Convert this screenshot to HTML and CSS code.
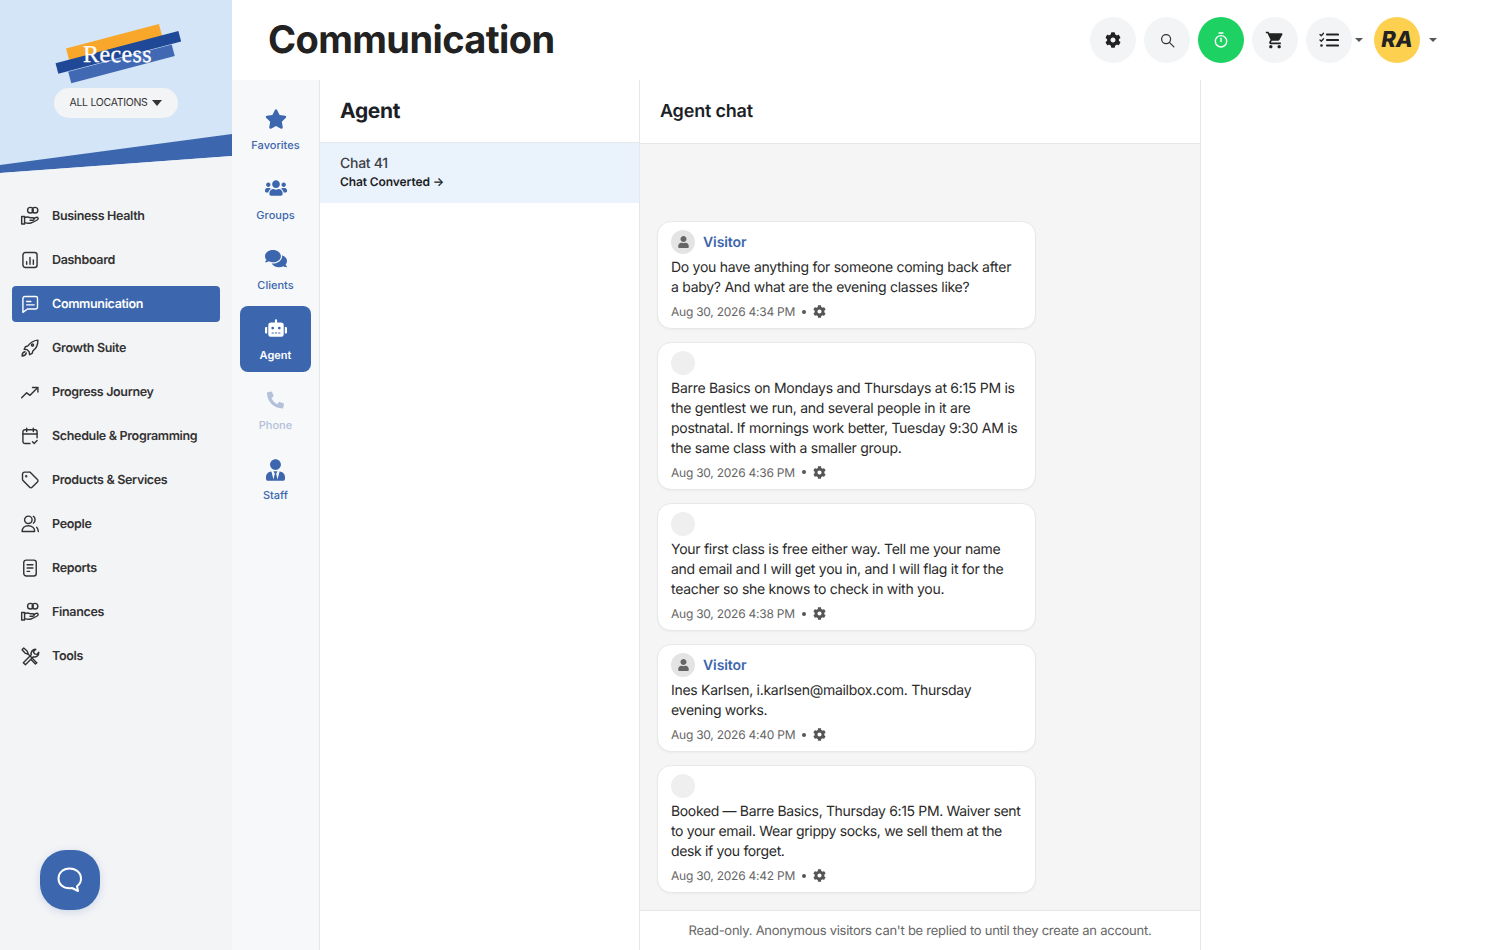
FILE: index.html
```html
<!DOCTYPE html>
<html lang="en">
  <head>
    <meta charset="UTF-8" />
    <meta name="viewport" content="width=device-width, initial-scale=1.0" />
    <title>Communication</title>
    <link rel="stylesheet" href="styles.css">
  </head>
  <body>
    <svg class="icon-defs" width="0" height="0">
      <symbol id="i-cog" viewBox="0 0 512 512"><path d="M487.4 315.7l-42.6-24.6c4.3-23.2 4.3-47 0-70.2l42.6-24.6c4.9-2.8 7.1-8.6 5.5-14-11.1-35.6-30-67.8-54.7-94.6-3.8-4.1-10-5.1-14.8-2.3L380.8 110c-17.9-15.4-38.5-27.3-60.8-35.1V25.8c0-5.6-3.9-10.5-9.4-11.7-36.7-8.2-74.3-7.8-109.2 0-5.5 1.2-9.4 6.1-9.4 11.7V75c-22.2 7.9-42.8 19.8-60.8 35.1L88.7 85.5c-4.9-2.8-11-1.9-14.8 2.3-24.7 26.7-43.6 58.9-54.7 94.6-1.7 5.4.6 11.2 5.5 14L67.3 221c-4.3 23.2-4.3 47 0 70.2l-42.6 24.6c-4.9 2.8-7.1 8.6-5.5 14 11.1 35.6 30 67.8 54.7 94.6 3.8 4.1 10 5.1 14.8 2.3l42.6-24.6c17.9 15.4 38.5 27.3 60.8 35.1v49.2c0 5.6 3.9 10.5 9.4 11.7 36.7 8.2 74.3 7.8 109.2 0 5.5-1.2 9.4-6.1 9.4-11.7v-49.2c22.2-7.9 42.8-19.8 60.8-35.1l42.6 24.6c4.9 2.8 11 1.9 14.8-2.3 24.7-26.7 43.6-58.9 54.7-94.6 1.5-5.5-.7-11.3-5.6-14.1zM256 336c-44.1 0-80-35.9-80-80s35.9-80 80-80 80 35.9 80 80-35.9 80-80 80z"/></symbol>
      <symbol id="i-hand" viewBox="0 0 24 24"><g fill="none" stroke="currentColor" stroke-width="1.7" stroke-linecap="round" stroke-linejoin="round"><circle cx="12.5" cy="5" r="3.4"/><circle cx="18" cy="5" r="3.4"/><path d="M2 12.5h3.5V21.5H2z"/><path d="M5.5 14c3-1.5 4.5-1 6.5 0h3.5c1.8 0 1.8 3 0 3H12"/><path d="M5.5 20c6 1.8 9 .5 15.5-3.5 1.8-1.5.3-3.5-1.5-2.8l-3 1.3"/></g></symbol>
      <symbol id="i-user" viewBox="0 0 448 512"><path d="M224 256c70.7 0 128-57.3 128-128S294.7 0 224 0 96 57.3 96 128s57.3 128 128 128zm89.6 32h-16.7c-22.2 10.2-46.9 16-72.9 16s-50.6-5.8-72.9-16h-16.7C60.2 288 0 348.2 0 422.4V464c0 26.5 21.5 48 48 48h352c26.5 0 48-21.5 48-48v-41.6c0-74.2-60.2-134.4-134.4-134.4z"/></symbol>
    </svg>

    <div class="app">
      <aside class="sidebar">
        <div class="brand">
          <svg class="logo" width="140" height="70" viewBox="0 0 140 70">
            <rect x="18" y="18" width="96" height="13" fill="#f9a72b" transform="rotate(-14.7 66 24)"/>
            <rect x="7" y="29" width="127" height="11" fill="#1f4897" transform="rotate(-14.7 70 35)"/>
            <rect x="20" y="40" width="107" height="12" fill="#4169b3" transform="rotate(-14.7 73 46)"/>
            <text x="69.5" y="44" text-anchor="middle" class="logo-text">Recess</text>
          </svg>
          <button class="location-pill">ALL LOCATIONS <span class="pill-caret"></span></button>
        </div>

        <nav class="main-nav">
          <a class="nav-item" href="#">
            <svg class="nav-icon" viewBox="0 0 24 24"><use href="#i-hand"/></svg>
            Business Health
          </a>
          <a class="nav-item" href="#">
            <svg class="nav-icon" viewBox="0 0 24 24" fill="none" stroke="currentColor" stroke-width="1.7" stroke-linecap="round"><rect x="3.5" y="3" width="17" height="18" rx="3"/><path d="M8 17v-3M12 17V9M16 17v-5"/></svg>
            Dashboard
          </a>
          <a class="nav-item active" href="#">
            <svg class="nav-icon" viewBox="0 0 24 24" fill="none" stroke="currentColor" stroke-width="1.7" stroke-linecap="round" stroke-linejoin="round"><path d="M6 3h13a2 2 0 0 1 2 2v11a2 2 0 0 1-2 2H9l-5.5 4V5.5A2.5 2.5 0 0 1 6 3z"/><path d="M8 9h5M8 13h9"/></svg>
            Communication
          </a>
          <a class="nav-item" href="#">
            <svg class="nav-icon" viewBox="0 0 24 24" fill="none" stroke="currentColor" stroke-width="1.7" stroke-linecap="round" stroke-linejoin="round"><path d="M21.5 2.5c-5 .5-9 2.5-12 7l-3 1-1.5 3 3.5.5 2.5 2.5.5 3.5 3-1.5 1-3c4.5-3 6-7.5 6-13z"/><circle cx="15" cy="8.5" r="1.3"/><path d="M6 16.5c-2.5.5-3.5 2.5-3.5 5 2.5 0 4.5-1 5-3.5"/></svg>
            Growth Suite
          </a>
          <a class="nav-item" href="#">
            <svg class="nav-icon" viewBox="0 0 24 24" fill="none" stroke="currentColor" stroke-width="1.7" stroke-linecap="round" stroke-linejoin="round"><path d="M2 19l6-6 4 3 9-9"/><path d="M15 6.5h6.5V12"/></svg>
            Progress Journey
          </a>
          <a class="nav-item" href="#">
            <svg class="nav-icon" viewBox="0 0 24 24" fill="none" stroke="currentColor" stroke-width="1.7" stroke-linecap="round" stroke-linejoin="round"><path d="M12 21H6a2.5 2.5 0 0 1-2.5-2.5V7A2.5 2.5 0 0 1 6 4.5h12A2.5 2.5 0 0 1 20.5 7v7"/><path d="M3.5 9.5h17M8 2.5v4M16 2.5v4"/><path d="M15 19l2 2 3.5-3.5"/></svg>
            Schedule &amp; Programming
          </a>
          <a class="nav-item" href="#">
            <svg class="nav-icon" viewBox="0 0 24 24" fill="none" stroke="currentColor" stroke-width="1.7" stroke-linecap="round" stroke-linejoin="round"><path d="M3 5a2.5 2.5 0 0 1 2.5-2.5H11a2 2 0 0 1 1.5.6l8.4 8.4a2 2 0 0 1 0 2.9l-6.4 6.4a2 2 0 0 1-2.9 0L3.6 12.5A2 2 0 0 1 3 11z"/><circle cx="7.5" cy="7.5" r=".6"/></svg>
            Products &amp; Services
          </a>
          <a class="nav-item" href="#">
            <svg class="nav-icon" viewBox="0 0 24 24" fill="none" stroke="currentColor" stroke-width="1.7" stroke-linecap="round" stroke-linejoin="round"><circle cx="10" cy="7" r="4.5"/><path d="M2.5 21c0-4 3-7 7.5-7s7.5 3 7.5 6v1z"/><path d="M16 2.8c2.5 1 3 6.5 0 8.3M20 16c1.2 1.2 1.8 3 2 5"/></svg>
            People
          </a>
          <a class="nav-item" href="#">
            <svg class="nav-icon" viewBox="0 0 24 24" fill="none" stroke="currentColor" stroke-width="1.7" stroke-linecap="round"><rect x="4.5" y="2.5" width="15" height="19" rx="3"/><path d="M8.5 8h7M8.5 12h7M8.5 16h3"/></svg>
            Reports
          </a>
          <a class="nav-item" href="#">
            <svg class="nav-icon" viewBox="0 0 24 24"><use href="#i-hand"/></svg>
            Finances
          </a>
          <a class="nav-item" href="#">
            <svg class="nav-icon" viewBox="0 0 24 24" fill="none" stroke="currentColor" stroke-width="1.7" stroke-linecap="round" stroke-linejoin="round"><path d="M4 20l9.5-9.5c-1-3 1.5-7 5.5-6.5l-3 3 1.5 2.5L20.5 10l2-2.5c.5 4-3.5 6.5-6.5 5.5L6.5 22.5z"/><path d="M20 20L10 10 8.5 6 4.5 2.5 2.5 4.5 6 8.5l4 1.5"/><path d="M20 20l-1.5 1.5-5-5"/></svg>
            Tools
          </a>
        </nav>

        <button class="help-btn">
          <svg width="30" height="30" viewBox="0 0 30 30" fill="none" stroke="#fff" stroke-width="2" stroke-linejoin="round"><path d="M14.5 3.5c6.5 0 11.5 4.2 11.5 10 0 3.3-1.5 6-4 7.8l1 4.7-6-3c-.8.2-1.6.3-2.5.3C8 23.3 3.5 19.2 3.5 13.5s4.5-10 11-10z"/></svg>
        </button>
      </aside>

      <div class="main">
        <header class="topbar">
          <h1>Communication</h1>
          <div class="top-actions">
            <button class="round-btn">
              <svg width="16" height="16" fill="#222"><use href="#i-cog"/></svg>
            </button>
            <button class="round-btn">
              <svg width="15" height="15" viewBox="0 0 16 16" fill="none" stroke="#333" stroke-width="1.3" stroke-linecap="round"><circle cx="6.5" cy="6.5" r="4.8"/><path d="M10 10l4.8 4.8"/></svg>
            </button>
            <button class="round-btn timer-btn">
              <svg width="14" height="16" viewBox="0 0 16 18" fill="none" stroke="#fff" stroke-width="1.6" stroke-linecap="round"><circle cx="8" cy="10.5" r="6.5"/><path d="M8 7v3.8M5.8 1h4.4"/></svg>
            </button>
            <button class="round-btn">
              <svg width="20" height="20" viewBox="0 0 24 24" fill="#222"><path d="M7 18c-1.1 0-1.99.9-1.99 2S5.9 22 7 22s2-.9 2-2-.9-2-2-2zM1 2v2h2l3.6 7.59-1.35 2.45c-.16.28-.25.61-.25.96 0 1.1.9 2 2 2h12v-2H7.42c-.14 0-.25-.11-.25-.25l.03-.12.9-1.63h7.45c.75 0 1.41-.41 1.75-1.03l3.58-6.49c.08-.14.12-.31.12-.48 0-.55-.45-1-1-1H5.21l-.94-2H1zm16 16c-1.1 0-1.99.9-1.99 2s.89 2 1.99 2 2-.9 2-2-.9-2-2-2z"/></svg>
            </button>
            <button class="round-btn">
              <svg width="20" height="16" viewBox="0 0 20 16" fill="none" stroke="#222" stroke-width="2.2" stroke-linecap="round" stroke-linejoin="round"><path d="M8 2.5h11M8 8h11M8 13.5h11"/><path d="M1 2.5l1.3 1.3L4.5 1.3M1 8l1.3 1.3L4.5 6.8" stroke-width="1.3"/><circle cx="2.5" cy="13.5" r="1.3" fill="#222" stroke="none"/></svg>
            </button>
            <span class="caret caret-tasks"></span>
            <div class="avatar-ra">RA</div>
            <span class="caret caret-user"></span>
          </div>
        </header>

        <div class="content">
          <nav class="sub-nav">
            <a class="sub-item" href="#">
              <svg width="22" height="24" viewBox="0 -26 576 512" fill="currentColor"><path d="M259.3 17.8L194 150.2 47.9 171.5c-26.2 3.8-36.7 36.1-17.7 54.6l105.7 103-25 145.5c-4.5 26.3 23.2 46 46.4 33.7L288 439.6l130.7 68.7c23.2 12.2 50.9-7.4 46.4-33.7l-25-145.5 105.7-103c19-18.5 8.5-50.8-17.7-54.6L382 150.2 316.7 17.8c-11.7-23.6-45.6-23.9-57.4 0z"/></svg>
              Favorites
            </a>
            <a class="sub-item" href="#">
              <svg width="22" height="24" viewBox="0 0 640 512" fill="currentColor"><path d="M96 224c35.3 0 64-28.7 64-64s-28.7-64-64-64-64 28.7-64 64 28.7 64 64 64zm448 0c35.3 0 64-28.7 64-64s-28.7-64-64-64-64 28.7-64 64 28.7 64 64 64zm32 32h-64c-17.6 0-33.5 7.1-45.1 18.6 40.3 22.1 68.9 62 75.1 109.4h66c17.7 0 32-14.3 32-32v-32c0-35.3-28.7-64-64-64zm-256 0c61.9 0 112-50.1 112-112S381.9 32 320 32 208 82.1 208 144s50.1 112 112 112zm76.8 32h-8.3c-20.8 10-43.9 16-68.5 16s-47.6-6-68.5-16h-8.3C179.6 288 128 339.6 128 403.2V432c0 26.5 21.5 48 48 48h288c26.5 0 48-21.5 48-48v-28.8c0-63.6-51.6-115.2-115.2-115.2zm-223.7-13.4C161.5 263.1 145.6 256 128 256H64c-35.3 0-64 28.7-64 64v32c0 17.7 14.3 32 32 32h65.9c6.3-47.4 34.9-87.3 75.2-109.4z"/></svg>
              Groups
            </a>
            <a class="sub-item" href="#">
              <svg width="22" height="24" viewBox="0 -15 576 512" fill="currentColor"><path d="M416 192c0-88.4-93.1-160-208-160S0 103.6 0 192c0 34.3 14.1 65.9 38 92-13.4 30.2-35.5 54.2-35.8 54.5-2.2 2.3-2.8 5.7-1.5 8.7S4.8 352 8 352c36.6 0 66.9-12.3 88.7-25 32.2 15.7 70.3 25 111.3 25 114.9 0 208-71.6 208-160zm122 220c23.9-26 38-57.7 38-92 0-66.9-53.5-124.2-129.3-148.1.9 6.6 1.3 13.3 1.3 20.1 0 105.9-107.7 192-240 192-10.8 0-21.3-.8-31.7-1.9C207.8 439.6 281.8 480 368 480c41 0 79.1-9.2 111.3-25 21.8 12.7 52.1 25 88.7 25 3.2 0 6.1-1.9 7.3-4.8 1.3-2.9.7-6.3-1.5-8.7-.3-.3-22.4-24.2-35.8-54.5z"/></svg>
              Clients
            </a>
            <a class="sub-item active" href="#">
              <svg width="22" height="24" viewBox="0 0 640 512" fill="currentColor"><path d="M32,224H64V416H32A32,32,0,0,1,0,384V256A32,32,0,0,1,32,224Zm512-48V448a64,64,0,0,1-64,64H160a64,64,0,0,1-64-64V176a80,80,0,0,1,80-80H288V32a32,32,0,0,1,64,0V96H464A80,80,0,0,1,544,176ZM264,256a40,40,0,1,0-40,40A40,40,0,0,0,264,256Zm-8,128H192v32h64Zm96,0H288v32h64ZM456,256a40,40,0,1,0-40,40A40,40,0,0,0,456,256Zm-8,128H384v32h64ZM640,256V384a32,32,0,0,1-32,32H576V224h32A32,32,0,0,1,640,256Z"/></svg>
              Agent
            </a>
            <a class="sub-item disabled" href="#">
              <svg width="17" height="24" viewBox="0 -60 512 512" fill="currentColor" overflow="visible"><path d="M497.4 361.8l-112-48a24 24 0 0 0-28 6.9l-49.6 60.6A370.66 370.66 0 0 1 130.6 204.11l60.6-49.6a23.94 23.94 0 0 0 6.9-28l-48-112A24.16 24.16 0 0 0 122.6.61l-104 24A24 24 0 0 0 0 48c0 256.5 207.9 464 464 464a24 24 0 0 0 23.4-18.6l24-104a24.29 24.29 0 0 0-14.01-27.6z"/></svg>
              Phone
            </a>
            <a class="sub-item" href="#">
              <svg width="19" height="24" viewBox="0 -47 448 512" fill="currentColor" overflow="visible"><path d="M224 256c70.7 0 128-57.3 128-128S294.7 0 224 0 96 57.3 96 128s57.3 128 128 128zm95.8 32.6L272 480l-32-136 32-56h-96l32 56-32 136-47.8-191.4C56.9 292 0 350.3 0 422.4V464c0 26.5 21.5 48 48 48h352c26.5 0 48-21.5 48-48v-41.6c0-72.1-56.9-130.4-128.2-133.8z"/></svg>
              Staff
            </a>
          </nav>

          <section class="chat-list">
            <h2 class="list-title">Agent</h2>
            <a class="chat-row" href="#">
              <div class="chat-name">Chat 41</div>
              <div class="chat-status">Chat Converted →</div>
            </a>
          </section>

          <section class="chat-panel">
            <h2 class="panel-title">Agent chat</h2>
            <div class="messages">
              <div class="message">
                <div class="msg-head">
                  <span class="msg-avatar visitor"><svg width="11" height="12" fill="#666"><use href="#i-user"/></svg></span>
                  <span class="msg-author">Visitor</span>
                </div>
                <p class="msg-text">Do you have anything for someone coming back after a baby? And what are the evening classes like?</p>
                <div class="msg-meta">Aug 30, 2026 4:34 PM <span class="dot"></span> <svg width="13" height="13" fill="#555"><use href="#i-cog"/></svg></div>
              </div>

              <div class="message">
                <div class="msg-head"><span class="msg-avatar"></span></div>
                <p class="msg-text">Barre Basics on Mondays and Thursdays at 6:15 PM is the gentlest we run, and several people in it are postnatal. If mornings work better, Tuesday 9:30 AM is the same class with a smaller group.</p>
                <div class="msg-meta">Aug 30, 2026 4:36 PM <span class="dot"></span> <svg width="13" height="13" fill="#555"><use href="#i-cog"/></svg></div>
              </div>

              <div class="message">
                <div class="msg-head"><span class="msg-avatar"></span></div>
                <p class="msg-text">Your first class is free either way. Tell me your name and email and I will get you in, and I will flag it for the teacher so she knows to check in with you.</p>
                <div class="msg-meta">Aug 30, 2026 4:38 PM <span class="dot"></span> <svg width="13" height="13" fill="#555"><use href="#i-cog"/></svg></div>
              </div>

              <div class="message">
                <div class="msg-head">
                  <span class="msg-avatar visitor"><svg width="11" height="12" fill="#666"><use href="#i-user"/></svg></span>
                  <span class="msg-author">Visitor</span>
                </div>
                <p class="msg-text">Ines Karlsen, i.karlsen@mailbox.com. Thursday evening works.</p>
                <div class="msg-meta">Aug 30, 2026 4:40 PM <span class="dot"></span> <svg width="13" height="13" fill="#555"><use href="#i-cog"/></svg></div>
              </div>

              <div class="message">
                <div class="msg-head"><span class="msg-avatar"></span></div>
                <p class="msg-text msg-tight">Booked — Barre Basics, Thursday 6:15 PM. Waiver sent to your email. Wear grippy socks, we sell them at the desk if you forget.</p>
                <div class="msg-meta">Aug 30, 2026 4:42 PM <span class="dot"></span> <svg width="13" height="13" fill="#555"><use href="#i-cog"/></svg></div>
              </div>
            </div>
            <div class="read-only">Read-only. Anonymous visitors can't be replied to until they create an account.</div>
          </section>
        </div>
      </div>
    </div>
  </body>
</html>
```

FILE: styles.css
```css
* {
  box-sizing: border-box;
}

body {
  margin: 0;
  font-family: Inter, "Noto Sans", sans-serif;
  color: #222;
  background: #fff;
  text-rendering: geometricPrecision;
}

a {
  text-decoration: none;
  color: inherit;
}

button {
  border: none;
  font-family: inherit;
  cursor: pointer;
}

.icon-defs {
  position: absolute;
}

.app {
  display: flex;
  height: 100vh;
  overflow: hidden;
}

/* left sidebar */
.sidebar {
  width: 232px;
  flex-shrink: 0;
  display: flex;
  flex-direction: column;
  background: #f3f4f6;
}

.brand {
  position: relative;
  height: 174px;
  padding-top: 18px;
  display: flex;
  flex-direction: column;
  align-items: center;
  background: #d3e5f6;
  clip-path: polygon(0 0, 100% 0, 100% 156px, 0 173px);
}

.brand::after {
  content: "";
  position: absolute;
  inset: 0;
  background: #3c66ad;
  clip-path: polygon(0 165px, 100% 134px, 100% 156px, 0 173px);
}

.logo {
  margin-left: 4px;
  flex-shrink: 0;
  display: block;
}

.logo-text {
  font-family: "Liberation Serif", serif;
  font-size: 24px;
  letter-spacing: 0.4px;
  fill: #fff;
  stroke: #fff;
  stroke-width: 0.3px;
}

.location-pill {
  width: 124px;
  height: 30px;
  padding: 0 0 1px;
  border-radius: 15px;
  background: #f3f4f6;
  color: #333;
  font-size: 10.5px;
  letter-spacing: -0.3px;
  display: flex;
  align-items: center;
  justify-content: center;
  gap: 5px;
}

.pill-caret {
  border-left: 5px solid transparent;
  border-right: 5px solid transparent;
  border-top: 6px solid #333;
}

.main-nav {
  padding: 24px 12px 0;
  display: flex;
  flex-direction: column;
  gap: 8px;
}

.nav-item {
  height: 36px;
  padding-left: 8px;
  display: flex;
  align-items: center;
  gap: 12px;
  border-radius: 4px;
  font-size: 12.5px;
  font-weight: 600;
  letter-spacing: -0.33px;
  color: #333;
}

.nav-item.active {
  background: #3c66ad;
  color: #fff;
}

.nav-icon {
  width: 20px;
  height: 20px;
  flex-shrink: 0;
}

.help-btn {
  margin: auto 0 40px 40px;
  width: 60px;
  height: 60px;
  padding: 0;
  border-radius: 26px;
  background: #3c66ad;
  box-shadow: 0 2px 8px rgba(60, 102, 173, 0.2);
  display: flex;
  align-items: center;
  justify-content: center;
}

/* top bar */
.main {
  flex: 1;
  display: flex;
  flex-direction: column;
  min-width: 0;
}

.topbar {
  height: 80px;
  flex-shrink: 0;
  padding: 0 63px 0 36px;
  display: flex;
  align-items: center;
  justify-content: space-between;
}

.topbar h1 {
  margin: 0;
  font-size: 38px;
  font-weight: 700;
  letter-spacing: -0.6px;
  color: #222;
}

.top-actions {
  display: flex;
  align-items: center;
  gap: 8px;
}

.round-btn {
  width: 46px;
  height: 46px;
  padding: 0;
  border-radius: 50%;
  background: #f3f4f6;
  display: flex;
  align-items: center;
  justify-content: center;
}

.timer-btn {
  background: #1dd162;
}

.caret {
  border-left: 4px solid transparent;
  border-right: 4px solid transparent;
  border-top: 4px solid #555;
}

.caret-tasks {
  margin: 0 3px 0 -5px;
}

.caret-user {
  margin-left: 1px;
}

.avatar-ra {
  width: 46px;
  height: 46px;
  border-radius: 50%;
  background: #fdd04f;
  color: #222;
  font-size: 22px;
  font-weight: 800;
  font-style: italic;
  display: flex;
  align-items: center;
  justify-content: center;
}

/* content columns */
.content {
  flex: 1;
  display: flex;
  min-height: 0;
}

.sub-nav {
  width: 88px;
  flex-shrink: 0;
  padding: 16px 8px 0;
  display: flex;
  flex-direction: column;
  gap: 4px;
  background: #f6f8fa;
  border-right: 1px solid #e5e7eb;
}

.sub-item {
  width: 71px;
  height: 66px;
  padding-top: 10px;
  display: flex;
  flex-direction: column;
  align-items: center;
  gap: 8px;
  border-radius: 8px;
  font-size: 11px;
  font-weight: 500;
  color: #3c66ad;
}

.sub-item svg {
  flex-shrink: 0;
}

.sub-item.active {
  background: #3c66ad;
  color: #fff;
  font-weight: 600;
}

.sub-item.disabled {
  color: #b3c0d9;
}

.chat-list {
  width: 320px;
  flex-shrink: 0;
  border-right: 1px solid #e5e7eb;
}

.list-title {
  height: 63px;
  margin: 0;
  padding: 0 20px;
  display: flex;
  align-items: center;
  border-bottom: 1px solid #e5e7eb;
  font-size: 21px;
  font-weight: 700;
  letter-spacing: -0.3px;
  color: #1d1f27;
}

.chat-row {
  display: block;
  height: 60px;
  padding: 12px 20px 0;
  background: #eaf2fb;
}

.chat-name {
  font-size: 14px;
  font-weight: 500;
  line-height: 17px;
  letter-spacing: -0.28px;
  color: #3b3f46;
}

.chat-status {
  margin-top: 2px;
  font-size: 12px;
  font-weight: 600;
  line-height: 16px;
  letter-spacing: -0.1px;
  color: #1d1f27;
}

.chat-panel {
  width: 561px;
  flex-shrink: 0;
  display: flex;
  flex-direction: column;
  border-right: 1px solid #e5e7eb;
}

.panel-title {
  height: 64px;
  flex-shrink: 0;
  margin: 0;
  padding: 0 20px;
  display: flex;
  align-items: center;
  border-bottom: 1px solid #e5e7eb;
  font-size: 18px;
  font-weight: 600;
  letter-spacing: -0.2px;
  color: #1d1f27;
}

.messages {
  flex: 1;
  min-height: 0;
  padding: 0 17px 17px;
  display: flex;
  flex-direction: column;
  justify-content: flex-end;
  gap: 13px;
  background: #f5f5f5;
}

.message {
  width: 379px;
  padding: 8px 13px 0;
  background: #fff;
  border: 1px solid #e8e8e8;
  border-radius: 14px;
  box-shadow: 0 1px 2px rgba(0, 0, 0, 0.04);
}

.msg-head {
  height: 24px;
  display: flex;
  align-items: center;
  gap: 8px;
}

.msg-avatar {
  width: 24px;
  height: 24px;
  border-radius: 50%;
  background: #efefef;
  display: flex;
  align-items: center;
  justify-content: center;
}

.msg-avatar.visitor {
  background: #e4e4e4;
}

.msg-author {
  padding-top: 1px;
  font-size: 14px;
  font-weight: 600;
  letter-spacing: -0.1px;
  color: #3c66ad;
}

.msg-text {
  margin: 4.5px 0 0;
  font-size: 14px;
  line-height: 19.75px;
  letter-spacing: -0.28px;
  color: #2a2a2a;
}

.msg-tight {
  letter-spacing: -0.34px;
}

.msg-meta {
  height: 30.3px;
  padding-bottom: 2px;
  display: flex;
  align-items: center;
  gap: 7px;
  font-size: 12px;
  letter-spacing: -0.24px;
  color: #666;
}

.dot {
  width: 4px;
  height: 4px;
  border-radius: 50%;
  background: #555;
}

.read-only {
  height: 40px;
  flex-shrink: 0;
  display: flex;
  align-items: center;
  justify-content: center;
  border-top: 1px solid #e5e7eb;
  font-size: 13px;
  letter-spacing: -0.26px;
  color: #666;
}
```
